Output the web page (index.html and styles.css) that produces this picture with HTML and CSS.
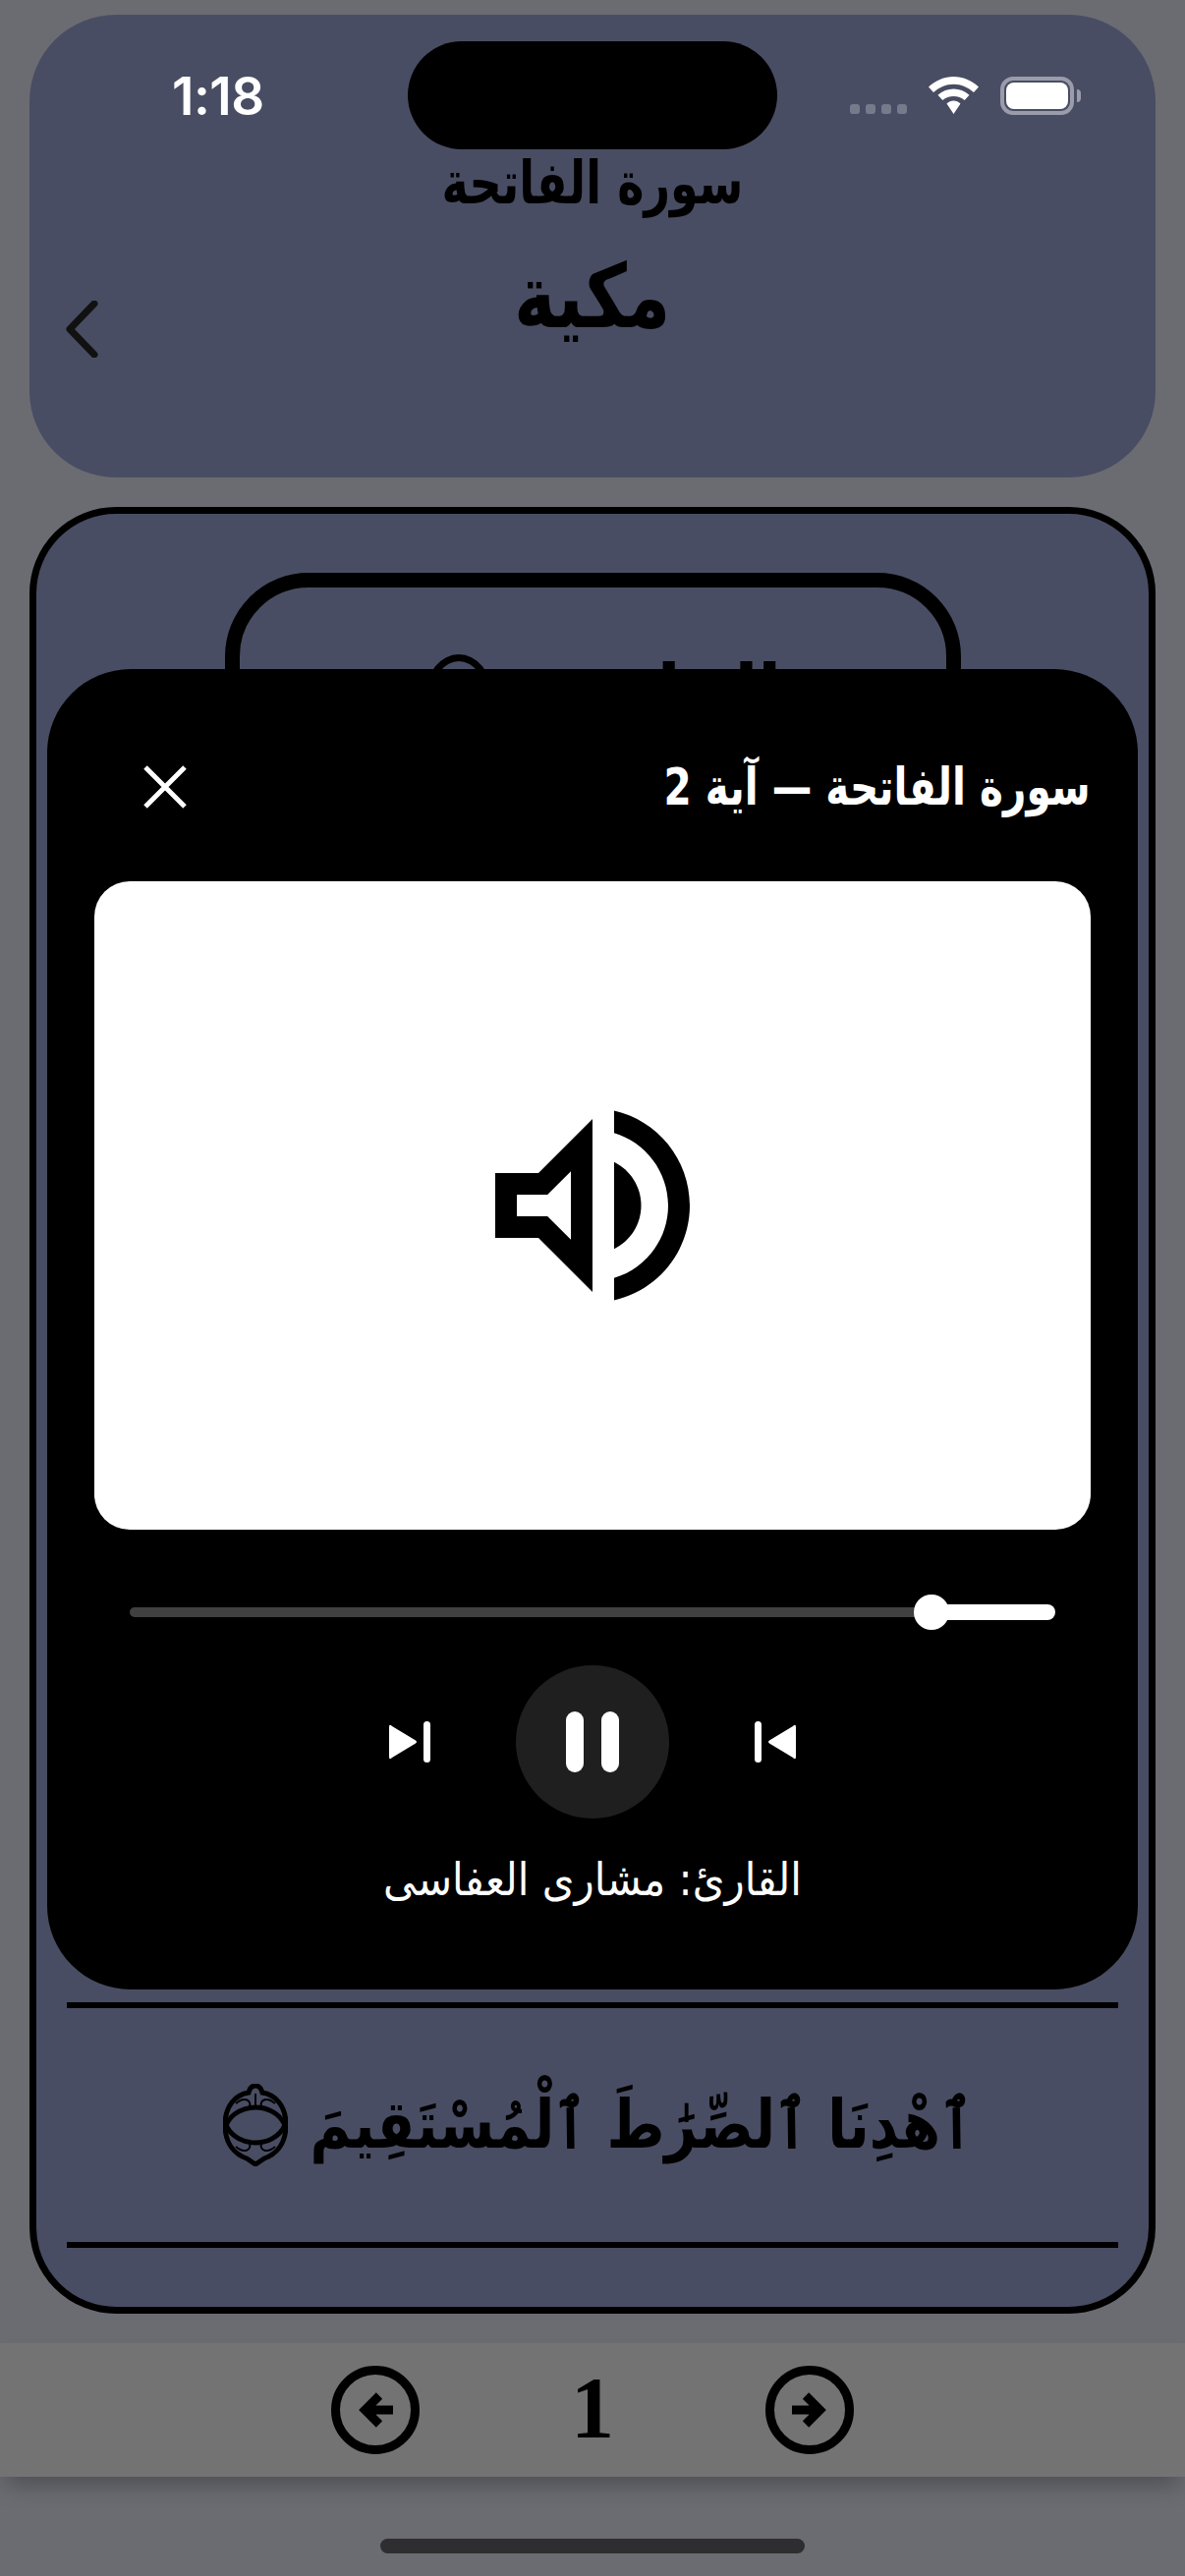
FILE: index.html
```html
<!DOCTYPE html>
<html lang="ar" dir="rtl">
<head>
<meta charset="utf-8">
<title>سورة الفاتحة</title>
<link rel="stylesheet" href="styles.css">
</head>
<body>
<div class="screen">
  <header class="hero">
    <div class="status" dir="ltr">
      <span class="time">1:18</span>
      <div class="status-icons">
        <div class="signal"><i></i><i></i><i></i><i></i></div>
        <svg class="wifi" viewBox="0 0 51 38"><path d="M25.5 0C16 0 7.500 3.700 0 10.500L5 16C11 11 17.500 7.800 25.500 7.800S40 11 46 16L51 10.500C43.500 3.700 35 0 25.500 0Z M25.500 12.500C19.500 12.500 14.200 14.700 9.500 18.800L14.300 24C17.500 21.500 21 20 25.500 20S33.500 21.500 36.700 24L41.500 18.800C36.800 14.700 31.500 12.500 25.500 12.500Z M25.500 24.500C23 24.500 20.500 25.500 18.500 27.500L25.500 38L32.500 27.500C30.500 25.500 28 24.500 25.500 24.500Z"/></svg>
        <div class="battery"><div class="battery-fill"></div></div>
        <div class="battery-nub"></div>
      </div>
    </div>
    <div class="island"></div>
    <h1 class="hero-title">سورة الفاتحة</h1>
    <div class="hero-row" dir="ltr">
      <svg class="chevron" viewBox="0 0 34 58"><path d="M30 3 L5 29 L30 55"/></svg>
      <span class="hero-sub">مكية</span>
    </div>
  </header>

  <main class="sheet">
    <div class="name-box">
      <div class="name-text"><span class="name-word">الفاتحة</span><b class="name-mark"></b></div>
    </div>
    <div class="verses">
      <div class="verse">
        <p class="verse-text">ٱهْدِنَا ٱلصِّرَٰطَ ٱلْمُسْتَقِيمَ</p>
        <svg class="ayah-mark" viewBox="0 0 66 84"><path class="ayah-line" d="M33 2C37 2 39 5 40 9C53 11 64 22 64 42C64 62 53 72 42 76L33 82L24 76C13 72 2 62 2 42C2 22 13 11 26 9C27 5 29 2 33 2Z"/><path class="ayah-line" d="M3 42C9 29 22 24 33 24C44 24 57 29 63 42C57 55 44 60 33 60C22 60 9 55 3 42Z"/><path class="ayah-thin" d="M33 10V24M13 20C21 13 29 16 27 23M53 20C45 13 37 16 39 23M13 64C21 71 29 68 27 61M53 64C45 71 37 68 39 61"/></svg>
      </div>
    </div>
  </main>

  <nav class="pager" dir="ltr">
    <svg class="pager-btn" viewBox="0 0 90 90"><circle cx="45" cy="45" r="40.500"/><path d="M49 30.500L34.500 45L49 59.500M36 45H63"/></svg>
    <span class="pager-num">1</span>
    <svg class="pager-btn" viewBox="0 0 90 90"><circle cx="45" cy="45" r="40.500"/><path d="M41 30.500L55.500 45L41 59.500M54 45H27"/></svg>
  </nav>
  <div class="home-bar"></div>

  <section class="player">
    <div class="player-head">
      <span class="player-title">سورة الفاتحة — آية 2</span>
      <svg class="close" viewBox="0 0 44 44"><path d="M2 2L42 42M42 2L2 42"/></svg>
    </div>
    <div class="art">
      <svg class="speaker" viewBox="0 0 24 24"><path fill-rule="evenodd" d="M3 9v6h4l5 5V4L7 9H3zm7-.17v6.340L7.830 13H5v-2h2.830L10 8.830z"/><path d="M16.500 12c0-1.770-1.020-3.290-2.500-4.030v8.050c1.480-.73 2.500-2.250 2.500-4.020z"/><path d="M14 3.230v2.060c2.890.86 5 3.540 5 6.710s-2.110 5.850-5 6.710v2.060c4.010-.91 7-4.490 7-8.770 0-4.280-2.990-7.860-7-8.770z"/></svg>
    </div>
    <div class="slider" dir="ltr">
      <div class="track-rest"></div>
      <div class="thumb"></div>
      <div class="track-done"></div>
    </div>
    <div class="controls" dir="ltr">
      <svg class="skip" viewBox="0 0 42 42"><path d="M0 6Q0 2 3 5L27 19.500Q29 21 27 22.500L3 37Q0 40 0 36Z"/><rect x="35" y="0" width="7" height="42" rx="3.500"/></svg>
      <div class="pause"><i></i><i></i></div>
      <svg class="skip" viewBox="0 0 42 42"><path d="M42 6Q42 2 39 5L15 19.500Q13 21 15 22.500L39 37Q42 40 42 36Z"/><rect x="0" y="0" width="7" height="42" rx="3.500"/></svg>
    </div>
    <p class="reciter">القارئ: مشارى العفاسى</p>
  </section>
</div>
</body>
</html>
```
FILE: styles.css
```css
* { box-sizing: border-box; }
html, body { margin: 0; padding: 0; }
body { background: #6b6c72; font-family: "DejaVu Sans", "Noto Sans", sans-serif; color: #000; }
.screen { position: relative; width: 1206px; height: 2622px; overflow: hidden; display: flex; flex-direction: column; padding-top: 15px; }

.hero { position: relative; width: 1146px; height: 471px; margin: 0 30px; background: #494d63; border-radius: 88px; }
.status { display: flex; justify-content: space-between; align-items: flex-start; padding: 53px 76px 0 145px; height: 132px; }
.time { font-family: Inter, sans-serif; font-weight: 600; font-size: 53px; line-height: 60px; color: #fff; letter-spacing: -.5px; }
.status-icons { display: flex; align-items: flex-start; margin-top: 10px; }
.signal { display: flex; gap: 6px; margin: 28px 22px 0 0; }
.signal i { width: 10px; height: 10px; border-radius: 3px; background: #777a8b; }
.wifi { width: 51px; height: 38px; fill: #fff; margin-right: 22px; }
.battery { width: 75px; height: 39px; border: 4px solid #9a9bab; border-radius: 13px; padding: 2px; }
.battery-fill { width: 100%; height: 100%; background: #fff; border-radius: 8px; }
.battery-nub { width: 4px; height: 13px; margin: 13px 0 0 3px; background: #9a9bab; border-radius: 0 4px 4px 0; }
.island { position: absolute; left: 385px; top: 27px; width: 376px; height: 110px; border-radius: 55px; background: #000; }
.hero-title { margin: 3px 0 0; text-align: center; font-size: 60px; font-weight: 700; line-height: 72px; height: 72px; transform: scaleX(.77); }
.hero-row { position: relative; display: flex; justify-content: center; align-items: center; margin-top: 30px; height: 100px; }
.hero-sub { font-size: 90px; font-weight: 700; line-height: 100px; transform: scaleX(.8); }
.chevron { position: absolute; left: 36px; top: 54px; width: 34px; height: 58px; fill: none; stroke: #111; stroke-width: 7; stroke-linecap: round; stroke-linejoin: round; }

.sheet { width: 1146px; height: 1839px; margin: 30px 30px 0; background: #494d63; border: 7px solid #000; border-radius: 88px; padding: 60px 31px 60px; display: flex; flex-direction: column; justify-content: space-between; align-items: stretch; }
.name-box { align-self: center; width: 749px; height: 300px; border: 15px solid #000; border-radius: 85px; overflow: hidden; padding: 65px 0 0 48px; }
.name-text { display: flex; justify-content: center; align-items: center; gap: 24px; font-size: 84px; font-weight: 700; line-height: 90px; white-space: nowrap; }
.name-word { transform: scaleX(.83); }
.name-mark { width: 68px; height: 84px; border: 7px solid #000; border-radius: 50%; }
.verses { border-top: 6px solid #000; border-bottom: 6px solid #000; }
.verse { height: 238px; padding-left: 11px; display: flex; align-items: center; justify-content: center; gap: 20px; }
.verse-text { margin: 0 0 0 -131px; font-size: 68px; font-weight: 700; line-height: 120px; white-space: nowrap; transform: scaleX(.835); transform-origin: right center; }
.ayah-mark { width: 66px; height: 84px; fill: none; stroke: #000; flex: none; }
.ayah-line { stroke-width: 5; }
.ayah-thin { stroke-width: 2; }

.pager { height: 136px; margin-top: 30px; background: #737373; display: flex; align-items: center; justify-content: center; gap: 140px; box-shadow: 0 14px 22px -6px rgba(0,0,0,.28); }
.pager-btn { width: 90px; height: 90px; fill: none; stroke: #000; stroke-width: 9; }
.pager-num { width: 72px; text-align: center; font-family: "Liberation Serif", serif; font-weight: 700; font-size: 88px; line-height: 90px; margin-top: -5px; }
.home-bar { width: 432px; height: 15px; margin: 63px auto 0; background: #2e2e30; border-radius: 8px; }

.player { position: absolute; left: 48px; top: 681px; width: 1110px; height: 1344px; background: #000; border-radius: 85px; padding: 0 48px; color: #fff; }
.player-head { height: 216px; padding: 24px 0 0 50px; display: flex; justify-content: space-between; align-items: center; }
.player-title { font-size: 52px; font-weight: 700; line-height: 60px; transform: scaleX(.78); transform-origin: right center; white-space: nowrap; }
.close { width: 44px; height: 44px; fill: none; stroke: #fff; stroke-width: 5; }
.art { height: 660px; background: #fff; border-radius: 36px; display: flex; align-items: center; justify-content: center; }
.speaker { width: 264px; height: 264px; fill: #000; }
.slider { display: flex; align-items: center; height: 36px; margin: 66px 36px 0; }
.track-rest { flex: 1; height: 10px; background: #404040; border-radius: 5px 0 0 5px; margin-right: -4px; }
.thumb { position: relative; width: 36px; height: 36px; border-radius: 50%; background: #fff; }
.track-done { width: 110px; height: 16px; margin-left: -2px; background: #fff; border-radius: 0 8px 8px 0; }
.controls { display: flex; align-items: center; justify-content: center; gap: 87px; margin-top: 36px; }
.skip { width: 42px; height: 42px; fill: #fff; }
.pause { width: 156px; height: 156px; border-radius: 50%; background: #1f1f1f; display: flex; align-items: center; justify-content: center; gap: 18px; }
.pause i { width: 18px; height: 62px; border-radius: 9px; background: #fff; }
.reciter { margin: 27px 0 0; text-align: center; font-size: 46px; line-height: 70px; transform: scaleX(.91); }
```
